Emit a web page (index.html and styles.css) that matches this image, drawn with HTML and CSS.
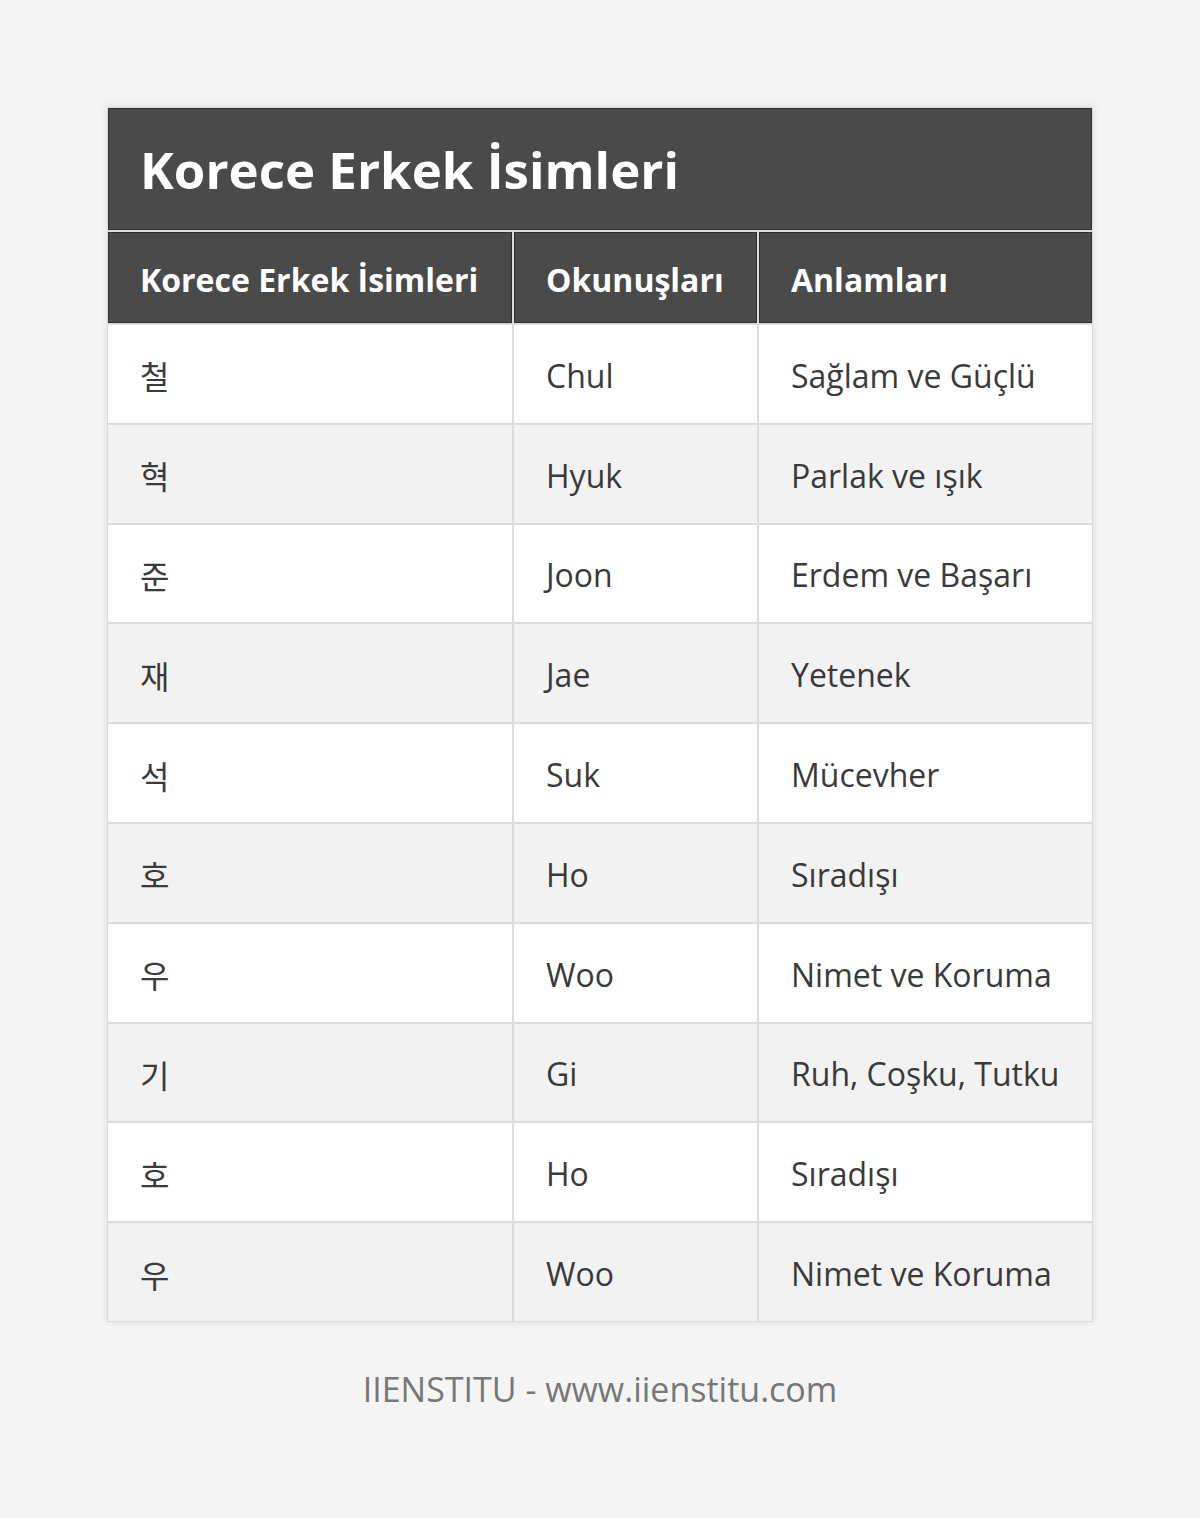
FILE: index.html
```html
<!DOCTYPE html>
<html lang="tr">
<head>
<meta charset="utf-8">
<link rel="stylesheet" href="styles.css">
</head>
<body>
<div class="page">
  <table class="names">
    <colgroup>
      <col class="c1">
      <col class="c2">
      <col class="c3">
    </colgroup>
    <thead>
      <tr class="title-row"><th class="title" colspan="3">Korece Erkek İsimleri</th></tr>
      <tr class="head">
        <th>Korece Erkek İsimleri</th>
        <th>Okunuşları</th>
        <th>Anlamları</th>
      </tr>
    </thead>
    <tbody>
      <tr><td class="ko">철</td><td>Chul</td><td>Sağlam ve Güçlü</td></tr>
      <tr><td class="ko">혁</td><td>Hyuk</td><td>Parlak ve ışık</td></tr>
      <tr><td class="ko">준</td><td>Joon</td><td>Erdem ve Başarı</td></tr>
      <tr><td class="ko">재</td><td>Jae</td><td>Yetenek</td></tr>
      <tr><td class="ko">석</td><td>Suk</td><td>Mücevher</td></tr>
      <tr><td class="ko">호</td><td>Ho</td><td>Sıradışı</td></tr>
      <tr><td class="ko">우</td><td>Woo</td><td>Nimet ve Koruma</td></tr>
      <tr><td class="ko">기</td><td>Gi</td><td>Ruh, Coşku, Tutku</td></tr>
      <tr><td class="ko">호</td><td>Ho</td><td>Sıradışı</td></tr>
      <tr><td class="ko">우</td><td>Woo</td><td>Nimet ve Koruma</td></tr>
    </tbody>
  </table>
  <p class="footer">IIENSTITU - www.iienstitu.com</p>
</div>
</body>
</html>
```
FILE: styles.css
```css
html, body {
  margin: 0;
  padding: 0;
  background: #f4f4f4;
}
body {
  font-family: "Open Sans", "Noto Sans CJK KR", sans-serif;
  color: #333;
}
.page {
  padding: 107px 0 0 0;
  display: flex;
  flex-direction: column;
  align-items: center;
}
.names {
  width: 986px;
  border-collapse: separate;
  border-spacing: 0;
  table-layout: fixed;
  box-shadow: 0 0 8px rgba(0, 0, 0, 0.1);
}
.c1 { width: 406px; }
.c2 { width: 245px; }
.c3 { width: 335px; }
.names th, .names td {
  text-align: left;
  padding: 0 0 0 32px;
  border: 1px solid #dcdcdc;
  box-sizing: border-box;
}
.title-row { height: 124px; }
.title {
  background: #4a4a4a;
  color: #fff;
  font-size: 51px;
  font-weight: 700;
  box-shadow: inset 0 0 0 1px #2e2e2e;
}
.head { height: 93px; }
.head th {
  background: #4a4a4a;
  color: #fff;
  font-size: 32px;
  font-weight: 700;
  white-space: nowrap;
  padding-top: 3px;
  box-shadow: inset 0 0 0 1px #2e2e2e;
}
.names tbody tr { height: 99.8px; }
.names td {
  font-size: 32px;
  background: #fff;
  color: #3a3a3a;
  padding-top: 3px;
}
.names tbody tr:nth-child(even) td {
  background: #f2f2f2;
}
.ko {
  font-family: "Noto Sans CJK KR", sans-serif;
  font-size: 29px;
}
.footer {
  margin: 44px 0 0 0;
  font-size: 34px;
  color: #777;
}
```
